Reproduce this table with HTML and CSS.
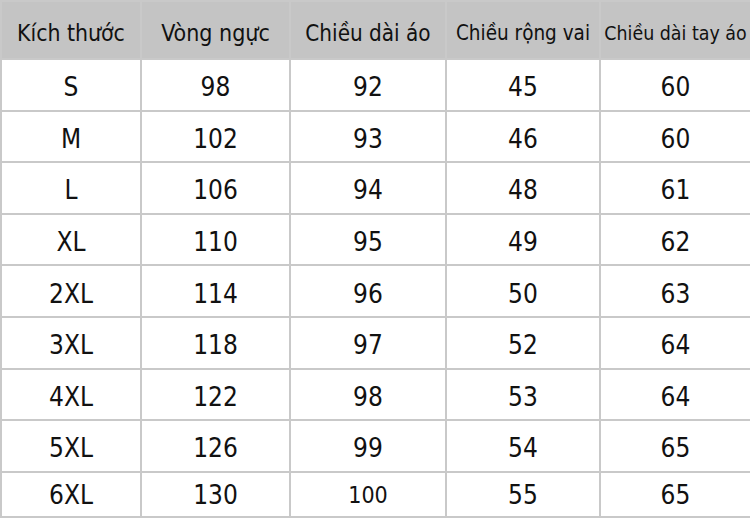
FILE: index.html
```html
<!DOCTYPE html>
<html lang="vi">
<head>
<meta charset="utf-8">
<link rel="stylesheet" href="styles.css">
</head>
<body>
<table class="size-table">
  <colgroup>
    <col class="c1"><col class="c2"><col class="c3"><col class="c4"><col class="c5">
  </colgroup>
  <thead>
    <tr>
      <th class="h1">Kích thước</th>
      <th class="h2">Vòng ngực</th>
      <th class="h3">Chiều dài áo</th>
      <th class="h4">Chiều rộng vai</th>
      <th class="h5">Chiều dài tay áo</th>
    </tr>
  </thead>
  <tbody>
    <tr><td>S</td><td>98</td><td>92</td><td>45</td><td>60</td></tr>
    <tr><td>M</td><td>102</td><td>93</td><td>46</td><td>60</td></tr>
    <tr><td>L</td><td>106</td><td>94</td><td>48</td><td>61</td></tr>
    <tr><td>XL</td><td>110</td><td>95</td><td>49</td><td>62</td></tr>
    <tr><td>2XL</td><td>114</td><td>96</td><td>50</td><td>63</td></tr>
    <tr><td>3XL</td><td>118</td><td>97</td><td>52</td><td>64</td></tr>
    <tr><td>4XL</td><td>122</td><td>98</td><td>53</td><td>64</td></tr>
    <tr><td>5XL</td><td>126</td><td>99</td><td>54</td><td>65</td></tr>
    <tr class="last"><td>6XL</td><td>130</td><td class="small-num">100</td><td>55</td><td>65</td></tr>
  </tbody>
</table>
</body>
</html>
```
FILE: styles.css
```css
html, body {
  margin: 0;
  padding: 0;
  background: #ffffff;
}
.size-table {
  border-collapse: collapse;
  table-layout: fixed;
  width: 750px;
  font-family: "DejaVu Sans Condensed", "DejaVu Sans", sans-serif;
  color: #111111;
}
.c1 { width: 140px; }
.c2 { width: 149px; }
.c3 { width: 156px; }
.c4 { width: 154px; }
.c5 { width: 151px; }
.size-table th,
.size-table td {
  border: 2px solid #c9c9c9;
  text-align: center;
  padding: 0;
}
.size-table th {
  background: #c4c4c4;
  font-weight: normal;
  height: 58px;
  padding-top: 6px;
  box-sizing: border-box;
  white-space: nowrap;
}
.size-table th.h1 { font-size: 22.8px; }
.size-table th.h2 { font-size: 23px; }
.size-table th.h3 { font-size: 22.3px; }
.size-table th.h4 { font-size: 20.5px; }
.size-table th.h5 { font-size: 19.4px; }
.size-table td {
  font-size: 26px;
  height: 51.6px;
  padding-top: 5px;
  box-sizing: border-box;
}
.size-table tr.last td {
  height: 45px;
  padding-top: 2px;
}
.size-table td.small-num { font-size: 23px; }
```
